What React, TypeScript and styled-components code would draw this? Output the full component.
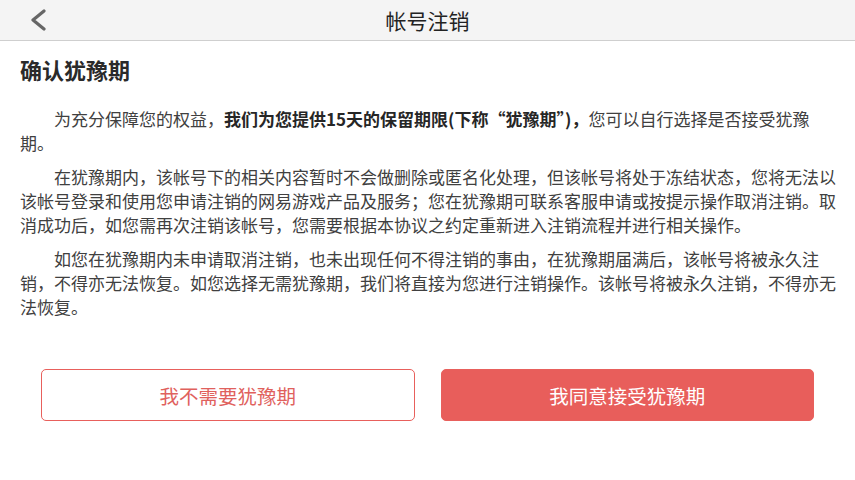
import React from "react";
import styled, { createGlobalStyle } from "styled-components";

const Global = createGlobalStyle`
  html, body { margin: 0; padding: 0; background: #fff; }
  body { font-family: "Noto Sans CJK SC", "Noto Sans", sans-serif; color: #333; }
  * { box-sizing: border-box; }
`;

const Page = styled.div`
  width: 855px;
  height: 480px;
  background: #fff;
  display: flex;
  flex-direction: column;
`;

const NavBar = styled.header`
  height: 41px;
  background: #f4f4f4;
  border-bottom: 1px solid #cfcfcf;
  display: grid;
  grid-template-columns: 80px 1fr 80px;
  align-items: center;
`;

const BackButton = styled.button`
  border: 0;
  background: transparent;
  padding: 0 0 0 30px;
  height: 40px;
  display: flex;
  align-items: center;
  cursor: pointer;
`;

const NavTitle = styled.h1`
  margin: 0;
  text-align: center;
  font-size: 21px;
  font-weight: 400;
  color: #222;
  line-height: 40px;
`;

const Content = styled.main`
  padding: 12px 19px 0 20px;
`;

const Heading = styled.h2`
  margin: 0 0 22px;
  font-size: 22px;
  line-height: 32px;
  font-weight: 700;
  color: #2a2a2a;
`;

const Para = styled.p`
  margin: 0 0 10px;
  font-size: 17px;
  line-height: 24px;
  text-indent: 2em;
  color: #404040;
`;

const Strong = styled.strong`
  font-weight: 700;
  color: #262626;
`;

const Actions = styled.div`
  display: flex;
  gap: 26px;
  padding: 40px 41px 0;
`;

const ActionButton = styled.button<{ $primary?: boolean }>`
  flex: 1;
  height: 52px;
  border-radius: 5px;
  font-family: inherit;
  font-size: 19.5px;
  cursor: pointer;
  border: 1.5px solid #e8605c;
  background: ${(p) => (p.$primary ? "#e85e5b" : "#fff")};
  color: ${(p) => (p.$primary ? "#fff" : "#e0615d")};
`;

export default function App() {
  return (
    <Page>
      <Global />
      <NavBar>
        <BackButton aria-label="返回">
          <svg width="16" height="22" viewBox="0 0 16 22">
            <polyline
              points="14,2 3,11 14,20"
              fill="none"
              stroke="#666"
              strokeWidth="3.2"
              strokeLinecap="round"
              strokeLinejoin="round"
            />
          </svg>
        </BackButton>
        <NavTitle>帐号注销</NavTitle>
        <span />
      </NavBar>
      <Content>
        <Heading>确认犹豫期</Heading>
        <Para>
          为充分保障您的权益，
          <Strong>我们为您提供15天的保留期限(下称“犹豫期”)，</Strong>
          您可以自行选择是否接受犹豫期。
        </Para>
        <Para>
          在犹豫期内，该帐号下的相关内容暂时不会做删除或匿名化处理，但该帐号将处于冻结状态，您将无法以该帐号登录和使用您申请注销的网易游戏产品及服务；您在犹豫期可联系客服申请或按提示操作取消注销。取消成功后，如您需再次注销该帐号，您需要根据本协议之约定重新进入注销流程并进行相关操作。
        </Para>
        <Para>
          如您在犹豫期内未申请取消注销，也未出现任何不得注销的事由，在犹豫期届满后，该帐号将被永久注销，不得亦无法恢复。如您选择无需犹豫期，我们将直接为您进行注销操作。该帐号将被永久注销，不得亦无法恢复。
        </Para>
      </Content>
      <Actions>
        <ActionButton>我不需要犹豫期</ActionButton>
        <ActionButton $primary>我同意接受犹豫期</ActionButton>
      </Actions>
    </Page>
  );
}
